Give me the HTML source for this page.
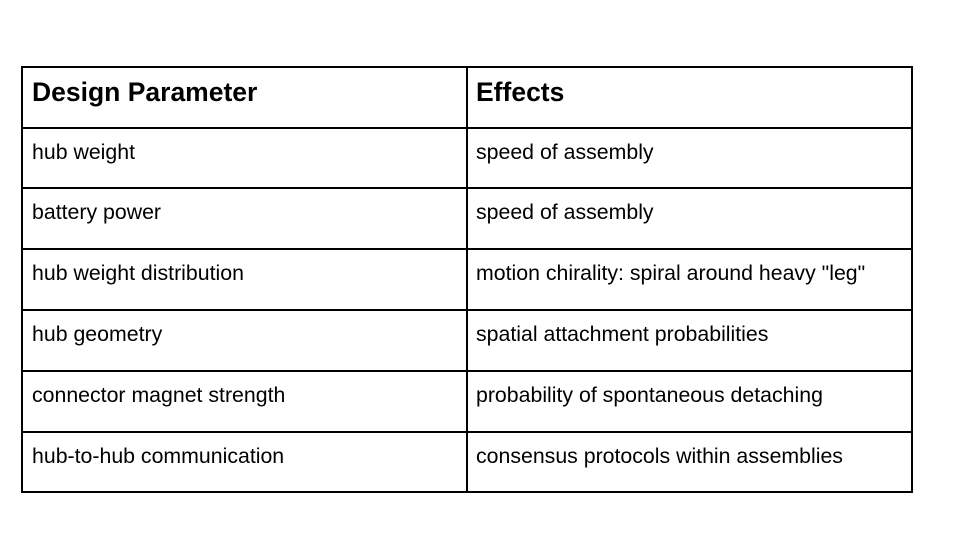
<!DOCTYPE html>
<html><head><style>
html,body{margin:0;padding:0;background:#fff;width:960px;height:540px;overflow:hidden;position:relative}
.h{position:absolute;left:21px;width:892px;height:2px;background:#000}
.v{position:absolute;top:66px;width:2px;height:427px;background:#000}
.t{position:absolute;font-family:"Liberation Sans",Arial,sans-serif;color:#000;font-size:21.3px;line-height:24px;white-space:nowrap}
.b{font-size:26.5px;font-weight:bold;line-height:30px}
</style></head><body>
<div class="h" style="top:66px"></div>
<div class="h" style="top:127px"></div>
<div class="h" style="top:187px"></div>
<div class="h" style="top:248px"></div>
<div class="h" style="top:309px"></div>
<div class="h" style="top:370px"></div>
<div class="h" style="top:431px"></div>
<div class="h" style="top:491px"></div>
<div class="v" style="left:21px"></div>
<div class="v" style="left:466px"></div>
<div class="v" style="left:911px"></div>
<div class="t b" style="left:32px;top:77px">Design Parameter</div>
<div class="t b" style="left:476px;top:77px">Effects</div>
<div class="t" style="left:32px;top:140px">hub weight</div>
<div class="t" style="left:476px;top:140px">speed of assembly</div>
<div class="t" style="left:32px;top:200px">battery power</div>
<div class="t" style="left:476px;top:200px">speed of assembly</div>
<div class="t" style="left:32px;top:261px">hub weight distribution</div>
<div class="t" style="left:476px;top:261px">motion chirality: spiral around heavy "leg"</div>
<div class="t" style="left:32px;top:322px">hub geometry</div>
<div class="t" style="left:476px;top:322px">spatial attachment probabilities</div>
<div class="t" style="left:32px;top:383px">connector magnet strength</div>
<div class="t" style="left:476px;top:383px">probability of spontaneous detaching</div>
<div class="t" style="left:32px;top:444px">hub-to-hub communication</div>
<div class="t" style="left:476px;top:444px">consensus protocols within assemblies</div>
</body></html>
